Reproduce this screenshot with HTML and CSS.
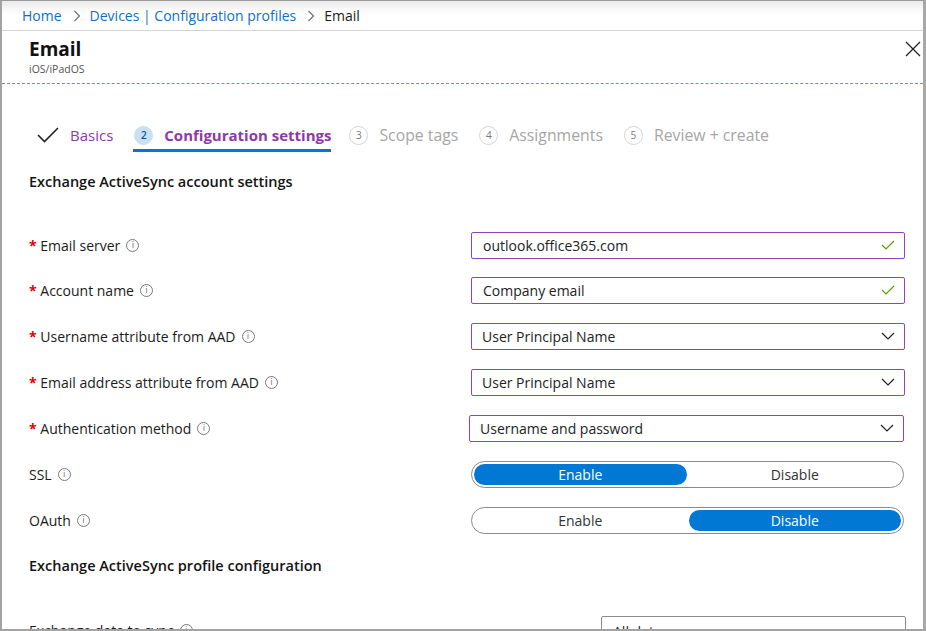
FILE: index.html
```html
<!DOCTYPE html>
<html>
<head>
<meta charset="utf-8">
<link rel="stylesheet" href="styles.css">
</head>
<body>
<div class="window">
  <div class="crumbs">
    <a class="link">Home</a>
    <span class="sep"><svg width="8" height="12" viewBox="0 0 8 12"><path d="M1.5 1 L6.5 6 L1.5 11" fill="none" stroke="#6a6a6a" stroke-width="1.1"/></svg></span>
    <a class="link">Devices | Configuration profiles</a>
    <span class="sep"><svg width="8" height="12" viewBox="0 0 8 12"><path d="M1.5 1 L6.5 6 L1.5 11" fill="none" stroke="#6a6a6a" stroke-width="1.1"/></svg></span>
    <span class="current">Email</span>
  </div>
  <div class="header">
    <div class="titles">
      <div class="title">Email</div>
      <div class="subtitle">iOS/iPadOS</div>
    </div>
    <div class="close"><svg width="16" height="16" viewBox="0 0 16 16"><path d="M1 1 L15 15 M15 1 L1 15" stroke="#222" stroke-width="1.3"/></svg></div>
  </div>
  <div class="steps">
    <div class="step done">
      <svg class="tick" width="22" height="16" viewBox="0 0 22 16"><path d="M1 8 L7.5 14.5 L21 1" fill="none" stroke="#222" stroke-width="1.6"/></svg>
      <span class="step-label">Basics</span>
    </div>
    <div class="step active">
      <span class="num">2</span>
      <span class="step-label">Configuration settings</span>
    </div>
    <div class="step todo">
      <span class="num">3</span>
      <span class="step-label">Scope tags</span>
    </div>
    <div class="step todo">
      <span class="num">4</span>
      <span class="step-label">Assignments</span>
    </div>
    <div class="step todo">
      <span class="num">5</span>
      <span class="step-label">Review + create</span>
    </div>
  </div>

  <div class="section">Exchange ActiveSync account settings</div>

  <div class="form">
    <div class="row r1">
      <div class="label"><span class="req">*</span> Email server<span class="info">i</span></div>
      <div class="field text">outlook.office365.com<svg class="ok" width="14" height="10" viewBox="0 0 14 10"><path d="M1 5 L5 9 L13 1" fill="none" stroke="#57a300" stroke-width="1.2"/></svg></div>
    </div>
    <div class="row r2">
      <div class="label"><span class="req">*</span> Account name<span class="info">i</span></div>
      <div class="field text">Company email<svg class="ok" width="14" height="10" viewBox="0 0 14 10"><path d="M1 5 L5 9 L13 1" fill="none" stroke="#57a300" stroke-width="1.2"/></svg></div>
    </div>
    <div class="row r3">
      <div class="label"><span class="req">*</span> Username attribute from AAD<span class="info">i</span></div>
      <div class="field select">User Principal Name<svg class="chev" width="14" height="8" viewBox="0 0 14 8"><path d="M1 1 L7 7 L13 1" fill="none" stroke="#222" stroke-width="1.2"/></svg></div>
    </div>
    <div class="row r4">
      <div class="label"><span class="req">*</span> Email address attribute from AAD<span class="info">i</span></div>
      <div class="field select">User Principal Name<svg class="chev" width="14" height="8" viewBox="0 0 14 8"><path d="M1 1 L7 7 L13 1" fill="none" stroke="#222" stroke-width="1.2"/></svg></div>
    </div>
    <div class="row r5">
      <div class="label"><span class="req">*</span> Authentication method<span class="info">i</span></div>
      <div class="field select shift">Username and password<svg class="chev" width="14" height="8" viewBox="0 0 14 8"><path d="M1 1 L7 7 L13 1" fill="none" stroke="#222" stroke-width="1.2"/></svg></div>
    </div>
    <div class="row r6">
      <div class="label">SSL<span class="info">i</span></div>
      <div class="toggle"><span class="opt on">Enable</span><span class="opt">Disable</span></div>
    </div>
    <div class="row r7">
      <div class="label">OAuth<span class="info">i</span></div>
      <div class="toggle"><span class="opt">Enable</span><span class="opt on">Disable</span></div>
    </div>
  </div>

  <div class="section s2">Exchange ActiveSync profile configuration</div>

  <div class="row r8">
    <div class="label">Exchange data to sync<span class="info">i</span></div>
    <div class="field plain">All data</div>
  </div>
</div>
</body>
</html>
```
FILE: styles.css
```css
html, body {
  margin: 0;
  padding: 0;
  background: #fff;
}
body {
  font-family: "Open Sans", "Noto Sans", sans-serif;
  color: #1b1b1b;
  font-size: 13px;
}
.window {
  width: 926px;
  height: 631px;
  box-sizing: border-box;
  border-left: 2px solid #a3a3a3;
  border-right: 3px solid #a8a8a8;
  border-top: 1px solid #9a9a9a;
  border-bottom: 2px solid #a3a3a3;
  overflow: hidden;
  position: relative;
}
.crumbs {
  height: 30px;
  box-sizing: border-box;
  background: linear-gradient(#e9e9e9 0px, #f8f8f8 8px, #ffffff 14px);
  border-bottom: 1px solid #d4d4d4;
  display: flex;
  align-items: center;
  padding-left: 20px;
  font-size: 14px;
}
.link {
  color: #0f6fc6;
}
.sep {
  display: inline-flex;
  margin: 0 9px 0 11px;
}
.current {
  color: #1b1b1b;
}
.header {
  height: 52px;
  border-bottom: 1px dashed #3aa4d8;
  display: flex;
  justify-content: space-between;
  padding-left: 27px;
}
.title {
  font-size: 19px;
  font-weight: 700;
  color: #111;
  margin-top: 5px;
  line-height: 26px;
}
.subtitle {
  font-size: 10.5px;
  color: #555;
  line-height: 14px;
}
.close {
  padding-top: 10px;
  width: 18px;
}
.steps {
  display: flex;
  align-items: center;
  padding-left: 35px;
  margin-top: 37px;
  height: 28px;
}
.step {
  display: flex;
  align-items: center;
  height: 28px;
  position: relative;
  margin-right: 21px;
  font-size: 15.8px;
}
.step.active {
  font-size: 15px;
  margin-right: 18px;
}
.step.done {
  font-size: 15px;
}
.step .tick {
  margin-right: 11px;
}
.step.done .step-label {
  color: #8a3ba8;
}
.num {
  width: 19px;
  height: 19px;
  border-radius: 50%;
  display: inline-flex;
  align-items: center;
  justify-content: center;
  font-size: 10px;
  margin-right: 11px;
  box-sizing: border-box;
}
.step.active .num {
  background: #c7e0f4;
  border: 1px solid #c7e0f4;
  color: #1a4f8a;
  font-weight: 600;
}
.step.active .step-label {
  color: #8a3ba8;
  font-weight: 700;
}
.step.active::after {
  content: "";
  position: absolute;
  left: -1px;
  right: 0;
  bottom: -3px;
  height: 3px;
  background: #0078d4;
}
.step.todo .num {
  border: 1px solid #d6d6d6;
  color: #777;
}
.step.todo .step-label {
  color: #a6a6a6;
}
.section {
  font-size: 14.5px;
  font-weight: 600;
  color: #141414;
  padding-left: 27px;
  margin-top: 23px;
  line-height: 20px;
}
.form {
  margin-top: 31px;
}
.row {
  display: flex;
  align-items: center;
  height: 46px;
}
.r1 { height: 44px; }
.label {
  width: 469px;
  flex: none;
  padding-left: 27px;
  box-sizing: border-box;
  font-size: 14px;
  color: #1b1b1b;
  display: flex;
  align-items: center;
  white-space: pre;
}
.req {
  color: #e00000;
  font-weight: 700;
}
.info {
  display: inline-flex;
  width: 13px;
  height: 13px;
  box-sizing: border-box;
  border: 1px solid #7a7a7a;
  border-radius: 50%;
  font-size: 8.5px;
  color: #7a7a7a;
  align-items: center;
  justify-content: center;
  line-height: 1;
  margin-left: 6px;
  font-family: "DejaVu Sans", sans-serif;
}
.field {
  width: 434px;
  flex: none;
  height: 27px;
  box-sizing: border-box;
  border: 1px solid #9443b4;
  border-radius: 2px;
  display: flex;
  align-items: center;
  justify-content: space-between;
  padding: 0 9px 0 11px;
  font-size: 14px;
  color: #222;
}
.field.select {
  padding-left: 10px;
  padding-right: 9px;
}
.field.shift {
  margin-left: -2px;
  width: 435px;
}
.toggle {
  width: 433px;
  flex: none;
  height: 27px;
  box-sizing: border-box;
  border: 1px solid #8a8a8a;
  border-radius: 14px;
  display: flex;
  padding: 2px;
  gap: 2px;
}
.opt {
  flex: 1;
  display: flex;
  align-items: center;
  justify-content: center;
  border-radius: 11px;
  font-size: 14px;
  color: #333;
}
.opt.on {
  background: #0078d4;
  color: #fff;
}
.s2 {
  margin-top: 13px;
}
.r8 {
  margin-top: 45px;
  align-items: flex-start;
}
.r8 .label {
  width: 599px;
}
.r8 .field.plain {
  width: 305px;
  border-color: #8a8a8a;
  height: 30px;
  align-items: flex-start;
  padding-top: 5px;
  margin-top: -5px;
}
```
